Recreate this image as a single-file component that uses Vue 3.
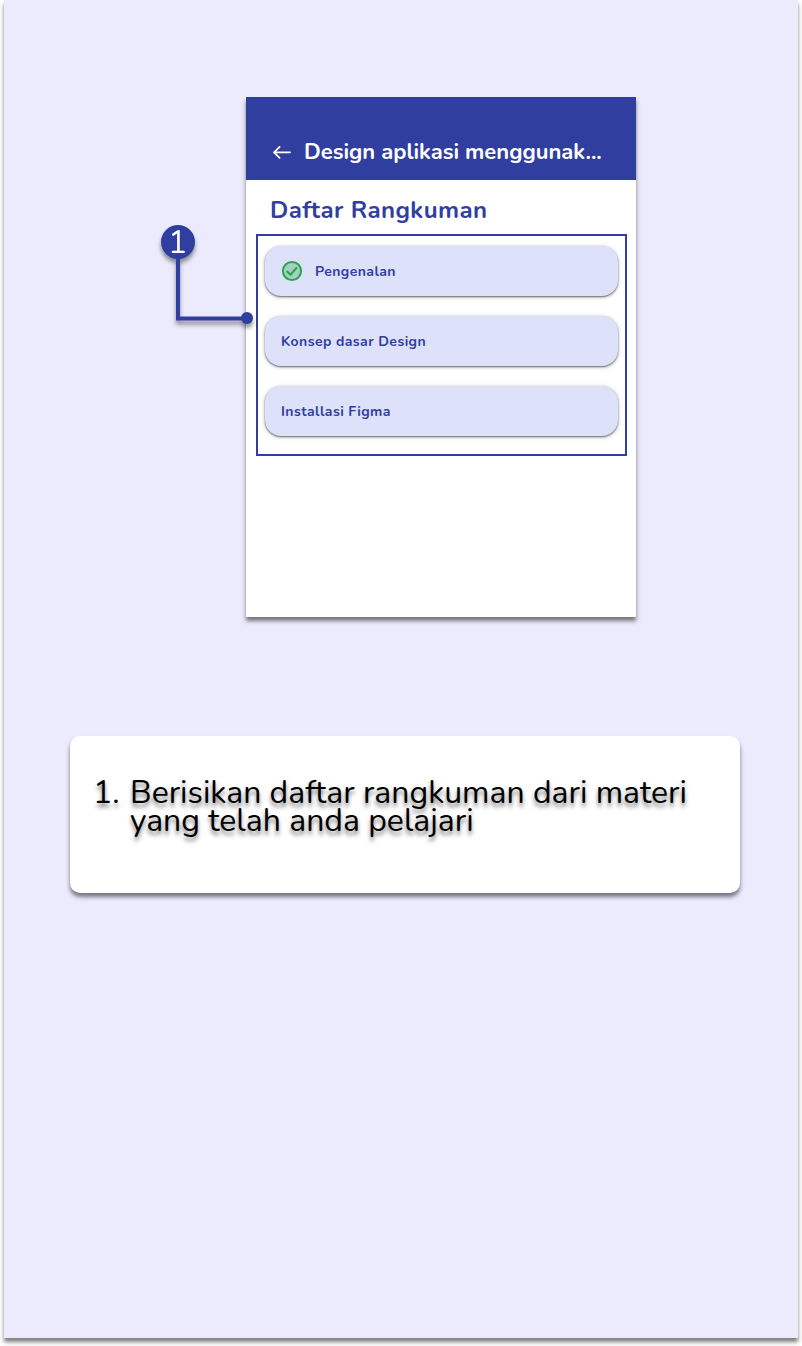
<script setup>
const summaries = [
  { title: 'Pengenalan', done: true },
  { title: 'Konsep dasar Design', done: false },
  { title: 'Installasi Figma', done: false },
]
</script>

<template>
  <main class="page">
    <section class="phone">
      <header class="bar">
        <svg class="back" width="20" height="16" viewBox="0 0 20 16">
          <path d="M18 8.3H2.2M7.6 2.8L2 8.3l5.6 5.6" fill="none" stroke="#fff" stroke-width="1.8" stroke-linecap="round" stroke-linejoin="round" />
        </svg>
        <h1 class="bar-title">Design aplikasi menggunak...</h1>
      </header>
      <h2 class="heading">Daftar Rangkuman</h2>
      <div class="list">
        <div v-for="s in summaries" :key="s.title" class="item">
          <svg v-if="s.done" class="check" width="22" height="22" viewBox="0 0 22 22">
            <circle cx="11" cy="11" r="9.1" fill="#a5cfc4" stroke="#28a745" stroke-width="2" />
            <path d="M5.7 11l3.8 3.7 6.5-7.3" fill="none" stroke="#28a745" stroke-width="2.1" />
          </svg>
          <span>{{ s.title }}</span>
        </div>
      </div>
      <div class="marker">
        <svg width="110" height="110" viewBox="0 0 110 110">
          <g fill="#303f9f">
            <circle cx="23" cy="22" r="17" />
            <path d="M21 36h4v60.5h67v4H21z" />
            <circle cx="92" cy="98" r="6" />
          </g>
        </svg>
        <span class="number">1</span>
      </div>
    </section>

    <section class="note">
      <span class="note-number">1.</span>
      <p class="note-text">Berisikan daftar rangkuman dari materi<br />yang telah anda pelajari</p>
    </section>
  </main>
</template>

<style>
body {
  background: #fff;
}
</style>

<style scoped>
.page {
  box-sizing: border-box;
  width: 794px;
  height: 1338px;
  margin: 0 4px 8px;
  padding-top: 97px;
  background: #ecebfe;
  box-shadow: 0 4px 4px rgba(0, 0, 0, 0.5);
  font-family: Nunito, Lato, "Open Sans", sans-serif;
}
.phone {
  position: relative;
  width: 390px;
  height: 520px;
  margin-left: 242px;
  background: #fff;
  box-shadow: 0 4px 4px rgba(0, 0, 0, 0.5);
}
.bar {
  box-sizing: border-box;
  display: flex;
  align-items: center;
  height: 83px;
  padding: 26px 0 0 26px;
  background: #303f9f;
}
.back {
  flex: none;
  margin-right: 12px;
}
.bar-title {
  margin: 0;
  color: #fff;
  font-size: 22px;
  line-height: 30px;
  font-weight: 700;
  white-space: nowrap;
}
.heading {
  margin: 14px 0 8px 24px;
  color: #303f9f;
  font-size: 24px;
  line-height: 32px;
  font-weight: 700;
  letter-spacing: 0.42px;
}
.list {
  box-sizing: border-box;
  display: flex;
  flex-direction: column;
  gap: 20px;
  width: 371px;
  height: 222px;
  margin-left: 10px;
  padding: 10px 7px;
  border: 2px solid #303f9f;
}
.item {
  box-sizing: border-box;
  display: flex;
  align-items: center;
  height: 50px;
  padding: 0 16px;
  border-radius: 16px;
  background: #dde1fa;
  color: #303f9f;
  font-size: 14px;
  font-weight: 700;
  letter-spacing: 0.42px;
  box-shadow: 0 1px 2px rgba(0, 0, 0, 0.55), 0 1px 4px 1px rgba(0, 0, 0, 0.13);
}
.check {
  margin-right: 12px;
}
.marker {
  position: absolute;
  left: -91px;
  top: 123px;
  width: 110px;
  height: 110px;
  filter: drop-shadow(0 4px 2px rgba(0, 0, 0, 0.42));
}
.number {
  position: absolute;
  left: 6px;
  top: 6px;
  width: 33px;
  color: #fff;
  font-size: 32px;
  line-height: 34px;
  text-align: center;
}
.note {
  box-sizing: border-box;
  display: flex;
  width: 670px;
  height: 157px;
  margin: 119px 0 0 66px;
  padding: 43px 0 0 23px;
  border-radius: 10px;
  background: #fff;
  box-shadow: 0 4px 4px rgba(0, 0, 0, 0.5);
  color: #000;
  font-size: 32px;
  line-height: 28px;
  text-shadow: 0 4px 4px rgba(0, 0, 0, 0.5);
}
.note-number {
  width: 37px;
}
.note-text {
  margin: 0;
  white-space: nowrap;
}
</style>
